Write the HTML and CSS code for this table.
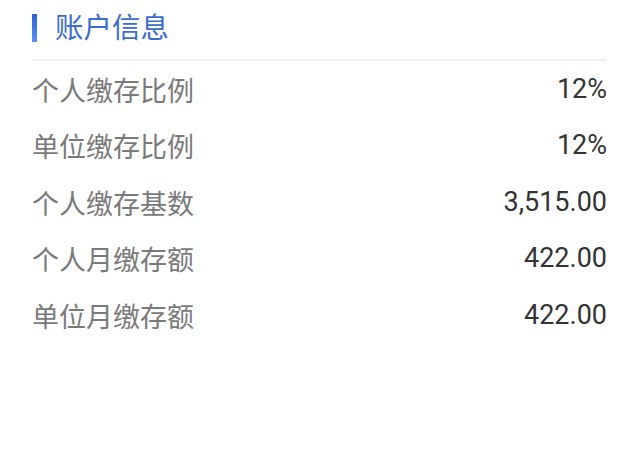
FILE: index.html
```html
<!DOCTYPE html>
<html lang="zh-CN">
<head>
<meta charset="utf-8">
<link rel="stylesheet" href="styles.css">
</head>
<body>
<div class="panel">
  <div class="header">
    <span class="bar"></span>
    <span class="title">账户信息</span>
  </div>
  <div class="rows">
    <div class="row"><span class="label">个人缴存比例</span><span class="value">12%</span></div>
    <div class="row"><span class="label">单位缴存比例</span><span class="value">12%</span></div>
    <div class="row"><span class="label">个人缴存基数</span><span class="value">3,515.00</span></div>
    <div class="row"><span class="label">个人月缴存额</span><span class="value">422.00</span></div>
    <div class="row"><span class="label">单位月缴存额</span><span class="value">422.00</span></div>
  </div>
</div>
</body>
</html>
```
FILE: styles.css
```css
html, body {
  margin: 0;
  padding: 0;
  background: #ffffff;
}
.panel {
  width: 575px;
  margin-left: 32px;
  font-family: Roboto, "Noto Sans CJK SC", sans-serif;
}
.header {
  height: 61px;
  display: flex;
  align-items: center;
  border-bottom: 2px solid #eeeeee;
  box-sizing: border-box;
  padding-bottom: 6px;
}
.bar {
  width: 5px;
  height: 28px;
  background: linear-gradient(to bottom, #2d62d8, #5a8ff0);
  margin-right: 18px;
  margin-top: 3px;
}
.title {
  font-family: "Noto Sans CJK SC", sans-serif;
  font-size: 28.5px;
  color: #3b6ccf;
  line-height: 1;
}
.rows {
  display: flex;
  flex-direction: column;
}
.row {
  height: 56.5px;
  display: flex;
  align-items: center;
  justify-content: space-between;
}
.label {
  font-family: "Noto Sans CJK SC", sans-serif;
  font-size: 27px;
  color: #7a7a7a;
  line-height: 1;
}
.value {
  font-family: Roboto, sans-serif;
  font-size: 27px;
  color: #333333;
  line-height: 1;
}
```
